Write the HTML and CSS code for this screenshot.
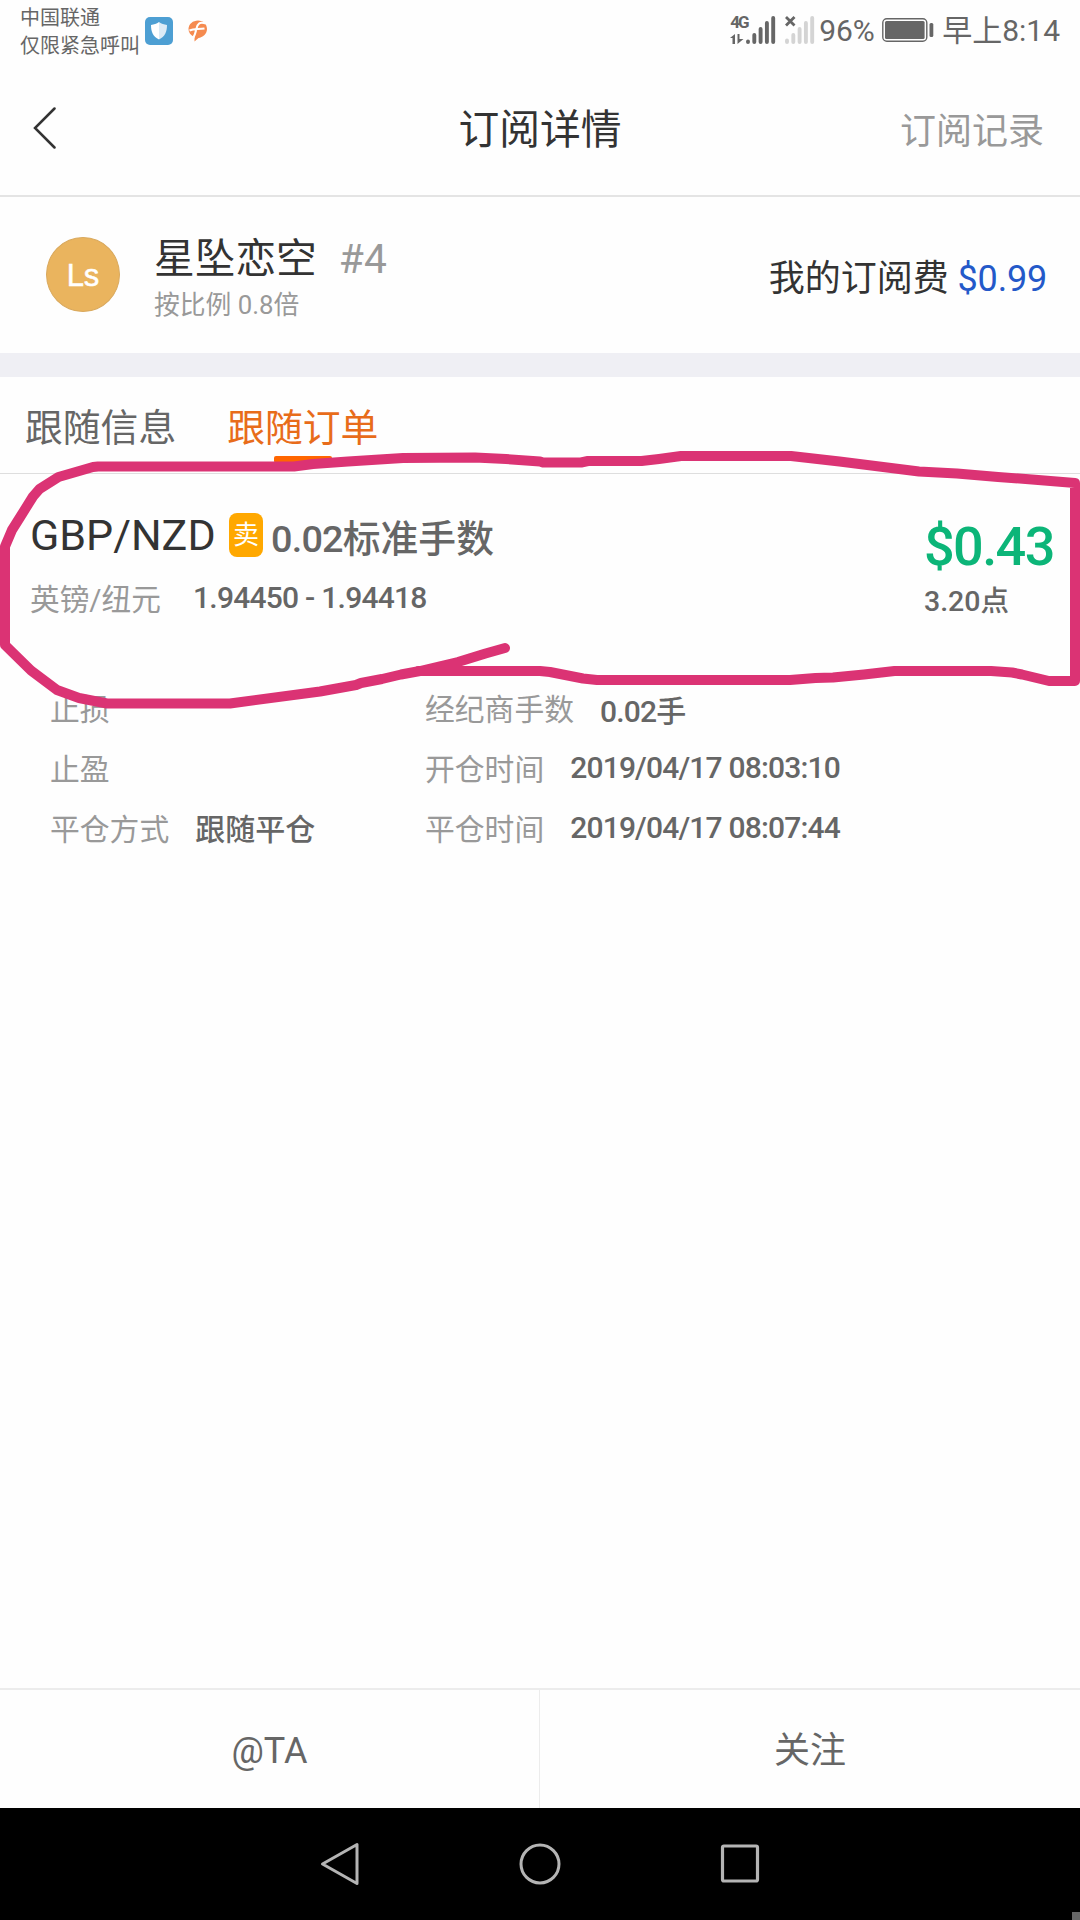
FILE: index.html
```
<!DOCTYPE html>
<html lang="zh-CN">
<head>
    <meta charset="UTF-8">
    <meta name="viewport" content="width=device-width, initial-scale=1.0">
    <title>订阅详情</title>
    <link rel="stylesheet" href="styles.css">
</head>
<body>
<div class="phone">
    <div class="status-bar">
        <div class="carrier">
            <p>中国联通</p>
            <p>仅限紧急呼叫</p>
        </div>
        <svg class="app-shield" width="28" height="28" viewBox="0 0 28 28">
            <rect width="28" height="28" rx="5" fill="#4d9fd3"/>
            <path d="M14 5C11.500 7 9 7.500 6 8C6 15 8 19.500 14 22.500Z" fill="#fff"/>
            <path d="M14 5C16.500 7 19 7.500 22 8C22 15 20 19.500 14 22.500Z" fill="#dcebf6"/>
        </svg>
        <svg class="app-f" width="20" height="22" viewBox="0 0 20 22">
            <path d="M10 0.500C15 0.500 19 4 19 9C19 14 14.500 17.500 10.500 18L6.500 21.500L6.500 17C2.500 15.500 0.500 12.500 0.500 9C0.500 4 5 0.500 10 0.500Z" fill="#f58b50"/>
            <path d="M18 3.500C11 1.500 9.500 4 8.500 8.500C7.500 13 7 15.500 4.500 19M1.500 10.500C6 8.500 10 9.500 16.500 8.500" fill="none" stroke="#fff" stroke-width="2"/>
        </svg>
        <div class="status-right">
            <div class="net">
                <span>4G</span>
                <svg width="14" height="10" viewBox="0 0 14 10">
                    <path d="M5 10H2.500V4H0L5 0ZM7.500 0H9.500V5H13.500L7.500 10Z" fill="#666"/>
                </svg>
            </div>
            <svg class="bars" width="30" height="28" viewBox="0 0 30 28">
                <path d="M2 25.500V26M8.300 19V26M14.600 13V26M20.900 7V26M27.200 2V26" stroke="#666" stroke-width="3.900" stroke-linecap="round"/>
            </svg>
            <svg class="bars-off" width="30" height="28" viewBox="0 0 30 28">
                <path d="M2 24.500V26M8.300 19V26M14.600 13V26M20.900 7V26M27.200 2V26" stroke="#d4d4d4" stroke-width="3.900" stroke-linecap="round"/>
                <path d="M1 1L9.500 9.500M9.500 1L1 9.500" stroke="#666" stroke-width="2.800"/>
            </svg>
            <span class="percent">96%</span>
            <svg class="battery" width="52" height="24" viewBox="0 0 52 24">
                <rect x="0.800" y="0.800" width="44" height="22.400" rx="4" fill="none" stroke="#666" stroke-width="1.400"/>
                <rect x="3" y="3" width="39.600" height="18" rx="1.500" fill="#666"/>
                <rect x="47.500" y="5" width="3.800" height="14" rx="1.500" fill="#666"/>
            </svg>
            <span class="clock">早上8:14</span>
        </div>
    </div>

    <header class="header">
        <svg class="back" width="24" height="42" viewBox="0 0 24 42">
            <path d="M21.500 1.500L2 21L21.500 40.500" fill="none" stroke="#333" stroke-width="2.500" stroke-linecap="round"/>
        </svg>
        <h1>订阅详情</h1>
        <a class="record">订阅记录</a>
    </header>

    <section class="user">
        <div class="avatar">Ls</div>
        <div class="user-info">
            <p class="name">星坠恋空 <span>#4</span></p>
            <p class="ratio">按比例 0.8倍</p>
        </div>
        <p class="fee">我的订阅费 <span>$0.99</span></p>
    </section>

    <nav class="tabs">
        <a class="tab">跟随信息</a>
        <a class="tab active">跟随订单</a>
    </nav>

    <main>
        <section class="order">
            <div class="order-left">
                <div class="pair">
                    <span class="symbol">GBP/NZD</span>
                    <span class="side">卖</span>
                    <span class="lots"><b>0.02</b>标准手数</span>
                </div>
                <div class="prices">
                    <span class="pair-name">英镑/纽元</span>
                    <span class="num">1.94450 - 1.94418</span>
                </div>
            </div>
            <div class="order-right">
                <p class="profit">$0.43</p>
                <p class="points">3.20点</p>
            </div>
        </section>

        <section class="details">
            <div class="cell"><span class="label">止损</span></div>
            <div class="cell"><span class="label">经纪商手数</span><span class="value low">0.02手</span></div>
            <div class="cell"><span class="label">止盈</span></div>
            <div class="cell"><span class="label">开仓时间</span><span class="value">2019/04/17 08:03:10</span></div>
            <div class="cell"><span class="label">平仓方式</span><span class="value cn">跟随平仓</span></div>
            <div class="cell"><span class="label">平仓时间</span><span class="value">2019/04/17 08:07:44</span></div>
        </section>
    </main>

    <footer class="actions">
        <a>@TA</a>
        <a>关注</a>
    </footer>

    <div class="nav-bar">
        <svg width="42" height="46" viewBox="0 0 42 46">
            <path d="M38 3.500V42.500L3.500 23Z" fill="none" stroke="#b4b4b4" stroke-width="3" stroke-linejoin="round"/>
        </svg>
        <svg width="42" height="42" viewBox="0 0 42 42">
            <circle cx="21" cy="21" r="19" fill="none" stroke="#b4b4b4" stroke-width="3"/>
        </svg>
        <svg width="42" height="42" viewBox="0 0 42 42">
            <rect x="3.500" y="3" width="35" height="35" rx="1.500" fill="none" stroke="#b4b4b4" stroke-width="3.200"/>
        </svg>
        <i class="corner"></i>
    </div>

    <!-- hand drawn marker round the order -->
    <svg class="marker" width="1080" height="260" viewBox="0 450 1080 260">
        <path d="M505 648L485.500 653.500L458 662L420 671L401 674.500L382 679L361 683L356 685L320 691.500L230 703.500H107L79 698L57 690L31 670.500L5 645V546.500L12 530L20.500 516.500L33 496.500L39.500 489L58.500 477L93 467L98 466.500H294L313 464L348 461.500L403 458L475 457.500L506 459L540 461.500L543 462.500H581L588 461H641.500L659 459L681 456H791L839.500 461.500L919 471.500L957 473.500L998 477L1032 479.500L1075 483V681H1049L1022 674.500L1012 672.500L991 671H894.500L864 674.500L833 677.500L815.500 678L790 680H597L583 678.500L550 672L540 671H418"/>
    </svg>
</div>
</body>
</html>
```
FILE: styles.css
```
*{
    margin: 0;
    padding: 0;
    box-sizing: border-box;
}

body{
    background-color: #fefefe;
    font-family: Roboto, "Noto Sans CJK SC", sans-serif;
    color: #333;
}

svg{
    display: block;
    flex-shrink: 0;
}

.phone{
    position: relative;
    width: 1080px;
    height: 1920px;
    overflow: hidden;
    display: flex;
    flex-direction: column;
    white-space: nowrap;
}

/* status bar */
.status-bar{
    height: 64px;
    display: flex;
    align-items: flex-start;
    padding: 4px 20px 0 20px;
    color: #666;
}

.carrier{
    width: 125px;
    font-size: 20px;
    line-height: 28px;
}

.app-shield{
    margin-top: 13px;
}

.app-f{
    margin: 16px 0 0 15px;
}

.status-right{
    display: flex;
    margin-left: auto;
    height: 52px;
    padding-top: 12px;
}

.net{
    width: 16px;
}

.net span{
    display: block;
    font-size: 17px;
    line-height: 13px;
    font-weight: 700;
    letter-spacing: -1.8px;
    margin-bottom: 5px;
}

.bars-off{
    margin-left: 9px;
}

.percent, .clock{
    font-size: 30px;
    line-height: 28px;
    padding-top: 1px;
}

.percent{
    margin-left: 4px;
    width: 63px;
}

.battery{
    margin: 2px 8px 0 0;
}

/* header */
.header{
    height: 133px;
    border-bottom: 2px solid #e4e4e4;
    display: grid;
    grid-template-columns: 1fr auto 1fr;
    align-items: center;
    padding: 0 36px 4px 33px;
}

.header h1{
    font-size: 40.8px;
    font-weight: 400;
    padding-left: 3px;
    margin-top: -2px;
}

.record{
    font-size: 36px;
    color: #999;
    justify-self: end;
}

/* user */
.user{
    height: 156px;
    display: flex;
    padding: 0 33px 0 46px;
}

.avatar{
    width: 74px;
    height: 75px;
    margin-top: 40px;
    border-radius: 50%;
    background-color: #eab45e;
    border: 1px solid #d9a95e;
    color: #fff;
    font: 31px/75px "Liberation Sans", Arial, sans-serif;
    text-align: center;
    -webkit-text-stroke: 0.5px #fff;
}

.user-info{
    margin-left: 34px;
    padding-top: 35px;
}

.name{
    font-size: 40.7px;
    line-height: 54px;
}

.name span{
    color: #999;
    margin-left: 12px;
}

.ratio{
    font-size: 25.8px;
    line-height: 38px;
    color: #999;
}

.fee{
    margin-left: auto;
    font-size: 36px;
    line-height: 54px;
    padding-top: 55px;
}

.fee span{
    color: #2459c9;
    letter-spacing: -0.2px;
}

/* tabs */
.tabs{
    height: 121px;
    border-top: 24px solid #efeff4;
    border-bottom: 1px solid #dedede;
    display: flex;
    gap: 51px;
    padding-left: 25px;
}

.tab{
    position: relative;
    font-size: 37.8px;
    line-height: 56px;
    padding-top: 23px;
    color: #666;
}

.tab.active{
    color: #e86c1a;
}

.tab.active::after{
    content: "";
    position: absolute;
    left: 47px;
    bottom: 10px;
    width: 58px;
    height: 7px;
    border-radius: 2px;
    background-color: #ff6600;
}

/* order */
main{
    flex: 1;
}

.order{
    display: flex;
    justify-content: space-between;
    height: 203px;
    padding: 33px 0 0 30px;
}

.pair{
    display: flex;
    align-items: center;
    height: 56px;
}

.symbol{
    font-size: 43px;
    width: 199px;
}

.side{
    width: 34px;
    height: 44px;
    margin: 0 8px 0 0;
    border-radius: 8px;
    background-color: #ffa800;
    color: #fff;
    font-size: 26px;
    line-height: 44px;
    text-align: center;
}

.lots{
    font-size: 37.8px;
    font-weight: 500;
    color: #666;
}

.lots b{
    font-weight: 500;
    letter-spacing: -0.8px;
}

.prices{
    display: flex;
    align-items: center;
    height: 44px;
    margin-top: 12px;
    font-size: 29.7px;
}

.pair-name{
    width: 163px;
    color: #999;
}

.num{
    font-size: 30px;
    font-weight: 500;
    letter-spacing: -0.75px;
    color: #666;
}

.order-right{
    width: 156px;
}

.profit{
    font-size: 54px;
    line-height: 64px;
    margin-top: 8px;
    font-weight: 500;
    letter-spacing: -1.6px;
    color: #0cb578;
}

.points{
    font-size: 28.500px;
    line-height: 44px;
    font-weight: 500;
    color: #666;
    padding-top: 1px;
}

/* details */
.details{
    display: grid;
    grid-template-columns: 375px 1fr;
    grid-auto-rows: 60px;
    padding-left: 50px;
}

.cell{
    display: flex;
    align-items: center;
    gap: 26px;
}

.label{
    font-size: 29.8px;
    color: #999;
}

.value{
    font-size: 30px;
    font-weight: 500;
    letter-spacing: -0.82px;
    color: #666;
}

.value.low{
    padding-top: 4px;
}

.value.cn{
    letter-spacing: 0;
}

/* bottom */
.actions{
    height: 120px;
    display: flex;
    border-top: 2px solid #ececec;
}

.actions a{
    width: 540px;
    text-align: center;
    font-size: 36px;
    line-height: 123px;
    height: 118px;
    color: #666;
}

.actions a:first-child{
    border-right: 1px solid #ececec;
}

.nav-bar{
    position: relative;
    height: 112px;
    background-color: #000;
    display: flex;
    justify-content: center;
    align-items: center;
    gap: 158px;
}

.corner{
    position: absolute;
    right: 0;
    bottom: 0;
    width: 8px;
    height: 8px;
    background-color: #666;
}

.marker{
    position: absolute;
    left: 0;
    top: 450px;
}

.marker path{
    fill: none;
    stroke: #db3374;
    stroke-width: 10;
    stroke-linejoin: round;
    stroke-linecap: round;
}
```
